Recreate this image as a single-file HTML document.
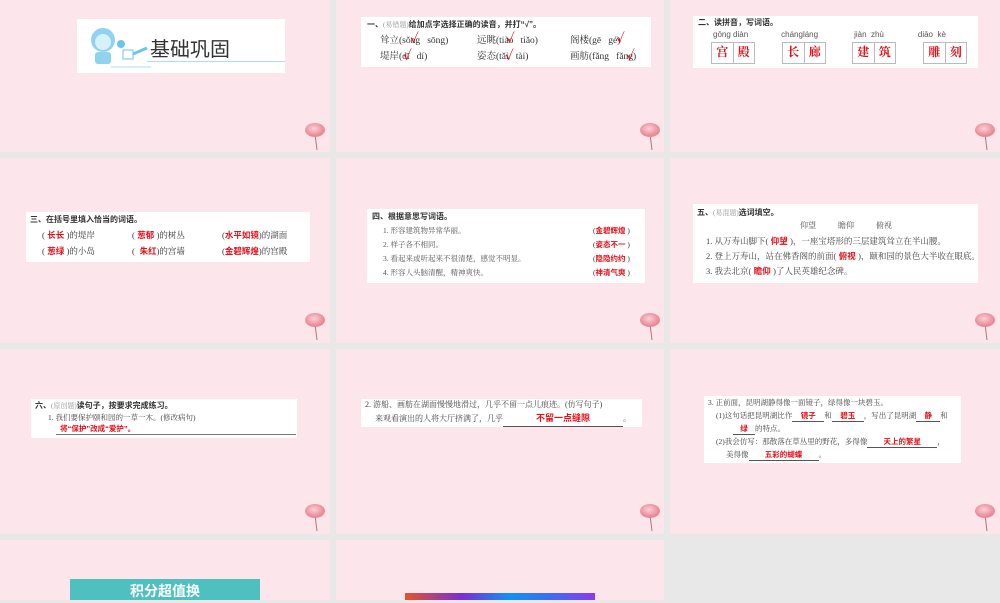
<!DOCTYPE html>
<html><head><meta charset="utf-8"><style>
*{margin:0;padding:0;box-sizing:border-box}
body{width:1000px;height:600px;background:#e8e8e8;position:relative;overflow:hidden;font-family:"Liberation Serif","Noto Serif CJK SC",serif;color:#333}
.s{position:absolute;background:#fde6eb}
.b{position:absolute;background:#fff;font-size:8px;line-height:1.5}
.r{color:#e0101a;font-weight:bold;font-family:"Liberation Sans","Noto Sans CJK SC",sans-serif}
.h{font-weight:bold;font-family:"Liberation Sans","Noto Sans CJK SC",sans-serif;font-size:8px}
.g{color:#999;font-weight:normal;font-size:7px}
.pin{position:absolute;width:22px;height:28px}
.row{position:absolute;white-space:nowrap}
.u{display:inline-block;border-bottom:1px solid #555;text-align:center}
.ck{position:absolute;font-size:13px;color:#e0101a;font-weight:bold;line-height:1}
</style></head><body>
<div class="s" style="left:0;top:0;width:330px;height:152px"></div>
<div class="s" style="left:336px;top:0;width:328px;height:152px"></div>
<div class="s" style="left:670px;top:0;width:330px;height:152px"></div>
<div class="s" style="left:0;top:158px;width:330px;height:185px"></div>
<div class="s" style="left:336px;top:158px;width:328px;height:185px"></div>
<div class="s" style="left:670px;top:158px;width:330px;height:185px"></div>
<div class="s" style="left:0;top:349px;width:330px;height:185px"></div>
<div class="s" style="left:336px;top:349px;width:328px;height:185px"></div>
<div class="s" style="left:670px;top:349px;width:330px;height:185px"></div>
<div class="s" style="left:0;top:540px;width:330px;height:60px"></div>
<div class="s" style="left:336px;top:540px;width:328px;height:60px"></div>

<svg width="0" height="0" style="position:absolute"><defs><radialGradient id="pg" cx="45%" cy="40%"><stop offset="0" stop-color="#fbd0d6"/><stop offset="1" stop-color="#e98a96"/></radialGradient></defs></svg>
<svg class="pin" style="left:304px;top:122px" viewBox="0 0 22 28"><line x1="11" y1="12" x2="13" y2="28" stroke="#a77" stroke-width="1"/><ellipse cx="11" cy="8" rx="10" ry="7" fill="url(#pg)"/></svg>
<svg class="pin" style="left:639px;top:122px" viewBox="0 0 22 28"><line x1="11" y1="12" x2="13" y2="28" stroke="#a77" stroke-width="1"/><ellipse cx="11" cy="8" rx="10" ry="7" fill="url(#pg)"/></svg>
<svg class="pin" style="left:974px;top:122px" viewBox="0 0 22 28"><line x1="11" y1="12" x2="13" y2="28" stroke="#a77" stroke-width="1"/><ellipse cx="11" cy="8" rx="10" ry="7" fill="url(#pg)"/></svg>
<svg class="pin" style="left:304px;top:312px" viewBox="0 0 22 28"><line x1="11" y1="12" x2="13" y2="28" stroke="#a77" stroke-width="1"/><ellipse cx="11" cy="8" rx="10" ry="7" fill="url(#pg)"/></svg>
<svg class="pin" style="left:639px;top:312px" viewBox="0 0 22 28"><line x1="11" y1="12" x2="13" y2="28" stroke="#a77" stroke-width="1"/><ellipse cx="11" cy="8" rx="10" ry="7" fill="url(#pg)"/></svg>
<svg class="pin" style="left:974px;top:312px" viewBox="0 0 22 28"><line x1="11" y1="12" x2="13" y2="28" stroke="#a77" stroke-width="1"/><ellipse cx="11" cy="8" rx="10" ry="7" fill="url(#pg)"/></svg>
<svg class="pin" style="left:304px;top:503px" viewBox="0 0 22 28"><line x1="11" y1="12" x2="13" y2="28" stroke="#a77" stroke-width="1"/><ellipse cx="11" cy="8" rx="10" ry="7" fill="url(#pg)"/></svg>
<svg class="pin" style="left:639px;top:503px" viewBox="0 0 22 28"><line x1="11" y1="12" x2="13" y2="28" stroke="#a77" stroke-width="1"/><ellipse cx="11" cy="8" rx="10" ry="7" fill="url(#pg)"/></svg>
<svg class="pin" style="left:974px;top:503px" viewBox="0 0 22 28"><line x1="11" y1="12" x2="13" y2="28" stroke="#a77" stroke-width="1"/><ellipse cx="11" cy="8" rx="10" ry="7" fill="url(#pg)"/></svg>

<!-- slide 1 -->
<div class="b" style="left:77px;top:19px;width:208px;height:54px">
<svg style="position:absolute;left:4px;top:5px" width="70" height="48" viewBox="0 0 70 48"><circle cx="22" cy="16" r="12" fill="#8fd3ee"/><circle cx="22" cy="18" r="8" fill="#d7f1fb"/><rect x="14" y="28" width="16" height="12" rx="3" fill="#8fd3ee"/><circle cx="40" cy="20" r="4" fill="#6cc4e8"/><rect x="42" y="26" width="10" height="9" fill="#fff" stroke="#6cc4e8"/><path d="M52 30 L66 24" stroke="#6cc4e8" stroke-width="3"/><line x1="30" y1="43" x2="70" y2="43" stroke="#a8dff2"/></svg>
<div style="position:absolute;left:73px;top:14px;font-size:20px;font-family:'Noto Sans CJK SC',sans-serif;color:#333">基础巩固</div>
<div style="position:absolute;left:70px;top:42px;width:138px;height:1px;background:#a8dff2"></div>
</div>

<!-- slide 2 -->
<div class="b" style="left:361px;top:17px;width:290px;height:50px;font-size:9.5px">
<div class="row" style="left:6px;top:1px"><span class="h">一、</span><span class="g">(易错题)</span><span class="h">给加点字选择正确的读音，并打“√”。</span></div>
<div class="row" style="left:19px;top:17px">耸立(sǒng&nbsp;&nbsp; sōng)</div>
<div class="row" style="left:116px;top:17px">远眺(tiào&nbsp;&nbsp; tiǎo)</div>
<div class="row" style="left:209px;top:17px">阁楼(gē&nbsp;&nbsp; gé)</div>
<div class="row" style="left:19px;top:33px">堤岸(dī&nbsp;&nbsp; dí)</div>
<div class="row" style="left:116px;top:33px">姿态(tǎi&nbsp;&nbsp; tài)</div>
<div class="row" style="left:209px;top:33px">画舫(fǎng&nbsp;&nbsp; fǎng)</div>
<span class="ck" style="left:49px;top:15px">✓</span>
<span class="ck" style="left:145px;top:15px">✓</span>
<span class="ck" style="left:255px;top:15px">✓</span>
<span class="ck" style="left:42px;top:32px">✓</span>
<span class="ck" style="left:144px;top:32px">✓</span>
<span class="ck" style="left:265px;top:32px">✓</span>
</div>

<!-- slide 3 -->
<div class="b" style="left:693px;top:16px;width:285px;height:52px">
<div class="row h" style="left:5px;top:1px">二、读拼音，写词语。</div>
<div class="row" style="left:20px;top:13px;font-family:'Liberation Sans',sans-serif;font-size:8px;color:#555">gōng diàn<span style="margin-left:33px">chánglánɡ</span><span style="margin-left:36px">jiàn&nbsp; zhù</span><span style="margin-left:34px">diāo&nbsp; kè</span></div>
<div style="position:absolute;left:18px;top:26px;width:44px;height:22px;border:1px solid #bbb;display:flex"><span class="r" style="flex:1;text-align:center;font-size:12px;border-right:1px solid #bbb;font-family:'Noto Serif CJK SC',serif">宫</span><span class="r" style="flex:1;text-align:center;font-size:12px;font-family:'Noto Serif CJK SC',serif">殿</span></div>
<div style="position:absolute;left:89px;top:26px;width:44px;height:22px;border:1px solid #bbb;display:flex"><span class="r" style="flex:1;text-align:center;font-size:12px;border-right:1px solid #bbb;font-family:'Noto Serif CJK SC',serif">长</span><span class="r" style="flex:1;text-align:center;font-size:12px;font-family:'Noto Serif CJK SC',serif">廊</span></div>
<div style="position:absolute;left:159px;top:26px;width:44px;height:22px;border:1px solid #bbb;display:flex"><span class="r" style="flex:1;text-align:center;font-size:12px;border-right:1px solid #bbb;font-family:'Noto Serif CJK SC',serif">建</span><span class="r" style="flex:1;text-align:center;font-size:12px;font-family:'Noto Serif CJK SC',serif">筑</span></div>
<div style="position:absolute;left:230px;top:26px;width:44px;height:22px;border:1px solid #bbb;display:flex"><span class="r" style="flex:1;text-align:center;font-size:12px;border-right:1px solid #bbb;font-family:'Noto Serif CJK SC',serif">雕</span><span class="r" style="flex:1;text-align:center;font-size:12px;font-family:'Noto Serif CJK SC',serif">刻</span></div>
</div>

<!-- slide 4 -->
<div class="b" style="left:26px;top:212px;width:284px;height:50px;font-size:8.5px">
<div class="row h" style="left:4px;top:2px">三、在括号里填入恰当的词语。</div>
<div class="row" style="left:16px;top:17px">(<span class="r"> 长长 </span>)的堤岸</div>
<div class="row" style="left:106px;top:17px">(<span class="r"> 葱郁 </span>)的树丛</div>
<div class="row" style="left:196px;top:17px">(<span class="r">水平如镜</span>)的湖面</div>
<div class="row" style="left:16px;top:33px">(<span class="r"> 葱绿 </span>)的小岛</div>
<div class="row" style="left:106px;top:33px">(<span class="r">&nbsp;&nbsp;朱红</span>)的宫墙</div>
<div class="row" style="left:196px;top:33px">(<span class="r">金碧辉煌</span>)的宫殿</div>
</div>

<!-- slide 5 -->
<div class="b" style="left:367px;top:209px;width:278px;height:74px;font-size:7.5px">
<div class="row h" style="left:5px;top:2px">四、根据意思写词语。</div>
<div class="row" style="left:16px;top:16px;color:#555">1. 形容建筑物异常华丽。</div>
<div class="row" style="left:16px;top:30px;color:#555">2. 样子各不相同。</div>
<div class="row" style="left:16px;top:44px;color:#555">3. 看起来或听起来不很清楚，感觉不明显。</div>
<div class="row" style="left:16px;top:58px;color:#555">4. 形容人头脑清醒，精神爽快。</div>
<div class="row" style="left:226px;top:16px">(<span class="r">金碧辉煌</span> )</div>
<div class="row" style="left:226px;top:30px">(<span class="r">姿态不一</span> )</div>
<div class="row" style="left:226px;top:44px">(<span class="r">隐隐约约</span> )</div>
<div class="row" style="left:226px;top:58px">(<span class="r">神清气爽</span> )</div>
</div>

<!-- slide 6 -->
<div class="b" style="left:693px;top:204px;width:285px;height:79px;font-size:8.5px">
<div class="row" style="left:4px;top:2px"><span class="h">五、</span><span class="g">(易混题)</span><span class="h">选词填空。</span></div>
<div class="row" style="left:107px;top:16px;color:#555;font-size:8px">仰望<span style="margin-left:22px">瞻仰</span><span style="margin-left:22px">俯视</span></div>
<div class="row" style="left:13px;top:31px;color:#444">1. 从万寿山脚下(<span class="r"> 仰望 </span>)，一座宝塔形的三层建筑耸立在半山腰。</div>
<div class="row" style="left:13px;top:46px;color:#444">2. 登上万寿山，站在佛香阁的前面(<span class="r"> 俯视 </span>)，颐和园的景色大半收在眼底。</div>
<div class="row" style="left:13px;top:61px;color:#444">3. 我去北京(<span class="r"> 瞻仰 </span>)了人民英雄纪念碑。</div>
</div>

<!-- slide 7 -->
<div class="b" style="left:31px;top:399px;width:266px;height:39px;font-size:7.5px">
<div class="row" style="left:4px;top:1px"><span class="h">六、</span><span class="g">(原创题)</span><span class="h">读句子，按要求完成练习。</span></div>
<div class="row" style="left:17px;top:13px;color:#444">1. 我们要保护颐和园的一草一木。(修改病句)</div>
<div class="row" style="left:25px;top:24px;width:240px;border-bottom:1px solid #777"><span class="r">&nbsp;&nbsp;将“保护”改成“爱护”。</span></div>
</div>

<!-- slide 8 -->
<div class="b" style="left:361px;top:399px;width:281px;height:28px;font-size:8px">
<div class="row" style="left:4px;top:0px;color:#444">2. 游船、画舫在湖面慢慢地滑过，几乎不留一点儿痕迹。(仿写句子)</div>
<div class="row" style="left:14px;top:13px;color:#444">来观看演出的人将大厅挤满了，几乎<span class="u r" style="width:120px;font-size:9px">不留一点缝隙</span>。</div>
</div>

<!-- slide 9 -->
<div class="b" style="left:704px;top:396px;width:257px;height:67px;font-size:7.5px">
<div class="row" style="left:4px;top:1px;color:#444">3. 正前面，昆明湖静得像一面镜子，绿得像一块碧玉。</div>
<div class="row" style="left:12px;top:14px;color:#444">(1)这句话把昆明湖比作<span class="u r" style="width:32px">镜子</span>和<span class="u r" style="width:32px">碧玉</span>，写出了昆明湖<span class="u r" style="width:24px">静</span>和</div>
<div class="row" style="left:29px;top:27px;color:#444"><span class="u r" style="width:22px">绿</span>的特点。</div>
<div class="row" style="left:12px;top:40px;color:#444">(2)我会仿写：那散落在草丛里的野花，多得像<span class="u r" style="width:70px">天上的繁星</span>，</div>
<div class="row" style="left:22px;top:53px;color:#444">美得像<span class="u r" style="width:70px">五彩的蝴蝶</span>。</div>
</div>

<!-- row 4 -->
<div style="position:absolute;left:70px;top:579px;width:190px;height:21px;background:#4fc0c0;color:#fff;font-family:'Noto Sans CJK SC',sans-serif;font-weight:bold;font-size:14px;text-align:center;line-height:24px">积分超值换</div>
<div style="position:absolute;left:405px;top:593px;width:190px;height:7px;background:linear-gradient(90deg,#e2532f,#7b2fd0 30%,#1390f5 55%,#3a70f0 75%,#8a3af0)"></div>
</body></html>
